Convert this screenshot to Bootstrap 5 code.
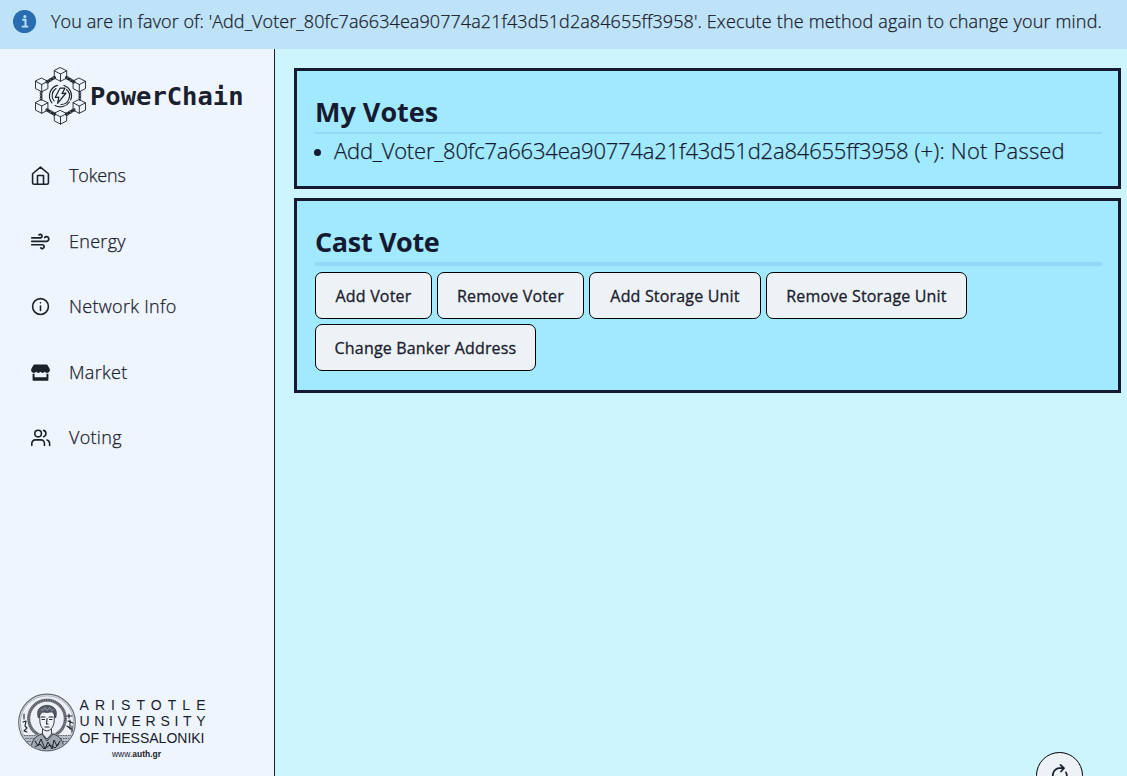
<!DOCTYPE html>
<html lang="en">
<head>
<meta charset="utf-8">
<meta name="viewport" content="width=device-width, initial-scale=1">
<title>PowerChain</title>
<link href="https://cdn.jsdelivr.net/npm/bootstrap@5.3.0/dist/css/bootstrap.min.css" rel="stylesheet">
<style>
body{font-family:"Open Sans","Noto Sans",sans-serif;font-weight:400;color:#1a202c;background:#cdf5fd;height:100vh;overflow:hidden}
.notice{height:49px;background:#bee3f8;padding:0 0 6px 13px}
.notice p{font-size:18px;font-weight:300;margin:0 0 0 14px;white-space:nowrap;letter-spacing:.07px;-webkit-text-stroke:.25px #1a202c}
.notice p span{letter-spacing:.18px}
.side{width:275px;background:#eef5ff;border-right:1px solid #1a202c}
.brand-row{height:94px;padding-left:34px}
.brand-row span{font:700 25.5px "DejaVu Sans Mono",monospace;margin-left:3px}
.menu a{height:65.5px;padding-left:31px;color:#1a202c;font-size:18px;font-weight:300;letter-spacing:.3px;-webkit-text-stroke:.25px #1a202c}
.menu a:first-child{letter-spacing:-.15px}
.menu svg{width:19px;height:19px;margin-right:19px;overflow:visible}
.ln{fill:none;stroke:#1a202c;stroke-linecap:round;stroke-linejoin:round}
.auth{padding:0 0 16px 17px}
.auth text{font-family:"Liberation Sans",sans-serif;fill:#1a202c}
.content{padding:19px 6px 0 19px;gap:9px}
.panel{border:3px solid #161a30;background:#a0e9ff;padding:23px 16px 19px 18px}
.panel h2{font-size:27px;font-weight:700;line-height:36px;margin:0 0 2px;color:#161a30}
.panel+.panel h2{letter-spacing:-.35px}
.rule{background:#89cff3;opacity:.6;height:2px}
.rule-thick{height:4px}
.panel ul{margin:-1px 0 0;padding:0;list-style:none}
.panel li{font-size:22px;font-weight:300;line-height:34px;white-space:nowrap;letter-spacing:-.2px;color:#161a30;-webkit-text-stroke:.25px #161a30}
.panel li::before{content:"";width:7px;height:7px;border-radius:50%;background:#161a30;margin:4px 13px 0 -1px}
.panel li span{letter-spacing:.2px;white-space:pre}
.votes{gap:5px;margin-top:6px}
.vote{height:47px;border:1px solid #000;border-radius:7px;background:#edf2f7;font-size:16px;font-weight:500;color:#1a202c;padding:0;white-space:nowrap;letter-spacing:.18px;-webkit-text-stroke:.3px #1a202c}
.refresh{position:fixed;left:1036px;top:752px;width:47px;height:47px;border-radius:50%;border:1px solid #000;background:#edf2f7}
</style>
</head>
<body class="d-flex flex-column">
<div class="notice d-flex align-items-center flex-shrink-0" role="alert">
<svg width="24" height="24" viewBox="0 0 24 24"><circle cx="11.5" cy="11.5" r="11.6" fill="#2b6cb0"/><path d="M9.300 9.700h3.200v6.500M8.800 16.600h6.400" stroke="#bee3f8" stroke-width="1.900" fill="none"/><circle cx="11.900" cy="6.500" r="1.500" fill="#bee3f8"/></svg>
<p>You are in favor of: 'Add_Voter_80fc7a6634ea90774a21f43d51d2a84655ff3958'<span>. Execute the method again to change your mind.</span></p>
</div>
<div class="d-flex flex-grow-1">
<aside class="side d-flex flex-column flex-shrink-0">
<div class="brand-row d-flex align-items-center">
<svg width="53" height="58" viewBox="0 0 53 58" class="ln" stroke-width=".9">
<defs><g id="cube"><path d="M0-6.8 6.2-3.7V3.6L0 6.8-6.2 3.6V-3.7ZM-6.2-3.7 0-.5 6.2-3.7M0-.5V6.8"/></g>
<g id="chain"><ellipse cx="-3.4" rx="2.1" ry="1.3"/><ellipse rx="2.1" ry="1.3"/><ellipse cx="3.4" rx="2.1" ry="1.3"/><path d="M-4.500 0h9" stroke-width="1.1"/></g></defs>
<use href="#cube" x="26.500" y="7.500"/><use href="#cube" x="45.300" y="18"/><use href="#cube" x="45.300" y="39.500"/><use href="#cube" x="26.500" y="50.300"/><use href="#cube" x="7.700" y="39.500"/><use href="#cube" x="7.700" y="18"/>
<use href="#chain" transform="translate(36.3 12.8) rotate(30)"/><use href="#chain" transform="translate(16.7 12.8) rotate(-30)"/><use href="#chain" transform="translate(36.3 45) rotate(-30)"/><use href="#chain" transform="translate(16.7 45) rotate(30)"/><use href="#chain" transform="translate(7.2 28.7) rotate(90) scale(.8)"/><use href="#chain" transform="translate(45.8 28.7) rotate(90) scale(.8)"/>
<path d="M23.500 18.400A11 11 0 0 0 18 36M21 38.500A11 11 0 0 0 35.500 35M36.700 33A11 11 0 0 0 30 18.400M22 21.500A8.500 8.500 0 0 0 20 34M27 37.500A8.500 8.500 0 0 0 32.500 22.500" stroke-width="1.100"/>
<path d="M26 21.200h5l-3 5.400 4-.6-8.400 10.300 1.200-6.100-3.600.3Z" stroke-width="1.200"/>
</svg>
<span>PowerChain</span>
</div>
<nav class="menu nav flex-column flex-nowrap">
<a class="d-flex align-items-center text-decoration-none" href="#"><svg viewBox="0 0 24 24" class="ln" stroke-width="2"><path d="M2 9.800 12 1.500l10 8.300V21a2 2 0 0 1-2 2H4a2 2 0 0 1-2-2ZM8.200 23V12h7.600v11"/></svg><span>Tokens</span></a>
<a class="d-flex align-items-center text-decoration-none" href="#"><svg viewBox="0 0 24 24" class="ln" stroke-width="2.200"><path d="M1 7.300h10.800a2.200 2.200 0 1 0-1.700-3.700M1 11.700h18.600a2.900 2.900 0 1 0-2.300-4.700M1 16.100h13.200a2.400 2.400 0 1 1-1.800 4"/></svg><span>Energy</span></a>
<a class="d-flex align-items-center text-decoration-none" href="#"><svg viewBox="0 0 24 24" class="ln" stroke-width="2"><circle cx="12" cy="12" r="10"/><path d="M12 11.500V17M12 7.300v.1"/></svg><span>Network Info</span></a>
<a class="d-flex align-items-center text-decoration-none" href="#"><svg viewBox="0 0 24 24" fill="#1a202c"><path d="M4.500 2h15q1 0 1.500.8l2.500 4.400c1.100 2.400-.5 5.300-3.300 5.300q-1.700 0-2.800-1.300-1 1.300-2.700 1.300t-2.700-1.300q-1 1.300-2.700 1.300t-2.700-1.300q-1.100 1.300-2.800 1.300c-2.800 0-4.400-2.900-3.300-5.300L3 2.800Q3.500 2 4.500 2Z"/><path d="M2 13.500q1.300.4 2.500 0V18h15v-4.500q1.200.4 2.500 0V21q0 1.500-1.500 1.500h-17Q2 22.500 2 21Z"/></svg><span>Market</span></a>
<a class="d-flex align-items-center text-decoration-none" href="#"><svg viewBox="0 0 24 24" class="ln" stroke-width="2"><circle cx="9" cy="7" r="4.200"/><path d="M1 22v-2.500a4.500 4.500 0 0 1 4.500-4.500h7a4.500 4.500 0 0 1 4.500 4.500V22M16 3a4.200 4.200 0 0 1 0 8M23.500 22v-2.500a4.500 4.500 0 0 0-3.300-4.300"/></svg><span>Voting</span></a>
</nav>
<div class="auth mt-auto">
<svg class="d-block" width="192" height="68" viewBox="0 0 192 68">
<defs><clipPath id="seal"><circle cx="30" cy="30.500" r="27.500"/></clipPath></defs>
<circle cx="30" cy="30.500" r="28.300" fill="#edf1f7" stroke="#686e79" stroke-width="1.200"/><circle cx="30" cy="30.500" r="26.700" fill="none" stroke="#8a909a" stroke-width=".7"/>
<g clip-path="url(#seal)">
<circle cx="30" cy="26.500" r="18.300" fill="none" stroke="#8b919b" stroke-width="3.300"/><circle cx="30" cy="26.500" r="18.300" fill="none" stroke="#4a505b" stroke-width="2.400" stroke-dasharray="1 .8"/>
<path d="M2 43h18l6-3h9l6 3h18v18H2Z" fill="#b8bec8"/><path d="M2 43.500h17M41 43.500h18M3 46.500h16M41 46.500h16M5 49.500h14M41 49.500h14" stroke="#5b616c" stroke-dasharray="1.500 1"/>
<path d="M14 58c0-9 4-14 11-16l5 7 6-7c7 2 11 7 11 16l-17 5Z" fill="#a0a6b0" stroke="#353b46"/><path d="M18 49l3 5 3-7 4 10 3-7 4 7 2-9 3 6 3-5M18 55l5-3 4 5 6-4 5 3 4-4" class="ln" stroke-width="1"/>
<path d="M25.500 36v6l4.500 5 4.500-5v-6" fill="#e6ebf2" stroke="#3a404b"/>
<path d="M22.500 23q0-6 7.500-6t7.500 6l-.5 8q-1.500 7-7 8-5.500-1-7-8Z" fill="#f0f3f8" stroke="#404651"/>
<path d="M21.300 26q-2.300-8 2.700-11 6-3.500 12 0 5 3 2.700 11l-1.700-4q-1.500-3-4-2-3 1-6 0-3 0-4 3Z" fill="#555b66" stroke="#303641" stroke-width=".7"/><path d="M24 17l2 1.500 2-3 2 3 2.500-3 2 3 2-1" fill="none" stroke="#aeb4be" stroke-width=".7"/>
<path d="M24 25h4M32 25h4M25 27.500h2.500M32.500 27.500H35M30 26.500 29.500 32h1.500M28 35h4" class="ln" stroke-width="1.100"/>
<path d="M7 22v5M6 30l3-1-1 5 2 2-3 3 3 1M52 22v4M50 24h5M51 29l5 2M53 28v9M50 34l4 3M55 34v6" class="ln" stroke-width="1.100"/>
</g>
<text x="62.500" y="17.500" font-size="14" textLength="126">ARISTOTLE</text><text x="62.500" y="34" font-size="14" textLength="126">UNIVERSITY</text><text x="62.500" y="51" font-size="14" textLength="125">OF THESSALONIKI</text><text x="95" y="64.500" font-size="8.500" textLength="49" lengthAdjust="spacingAndGlyphs">www.<tspan font-weight="700">auth.gr</tspan></text>
</svg>
</div>
</aside>
<main class="content flex-grow-1 d-flex flex-column">
<section class="panel">
<h2>My Votes</h2><div class="rule"></div>
<ul><li class="d-flex align-items-center">Add_Voter_80fc7a6634ea90774a21f43d51d2a84655ff3958<span> (+): Not Passed</span></li></ul>
</section>
<section class="panel">
<h2>Cast Vote</h2><div class="rule rule-thick"></div>
<div class="votes d-flex flex-wrap">
<button class="vote btn" style="width:117px">Add Voter</button><button class="vote btn" style="width:147px">Remove Voter</button><button class="vote btn" style="width:172px">Add Storage Unit</button><button class="vote btn" style="width:201px">Remove Storage Unit</button><button class="vote btn" style="width:221px">Change Banker Address</button>
</div>
</section>
</main>
</div>
<button class="refresh d-flex align-items-center justify-content-center p-0" aria-label="Refresh"><svg width="20" height="24" viewBox="0 0 20 24" class="ln" stroke-width="1.700"><path d="M3.500 15.500C1.500 10 4 4.500 9.500 4.200H14M10.500 1 14 4.200l-3 3.300M16 8.300c2.500 5.500 0 11-5.500 11.300H6M9.500 16.500 6 19.700l3.500 3"/></svg></button>
<script src="https://cdn.jsdelivr.net/npm/bootstrap@5.3.0/dist/js/bootstrap.bundle.min.js"></script>
</body>
</html>
